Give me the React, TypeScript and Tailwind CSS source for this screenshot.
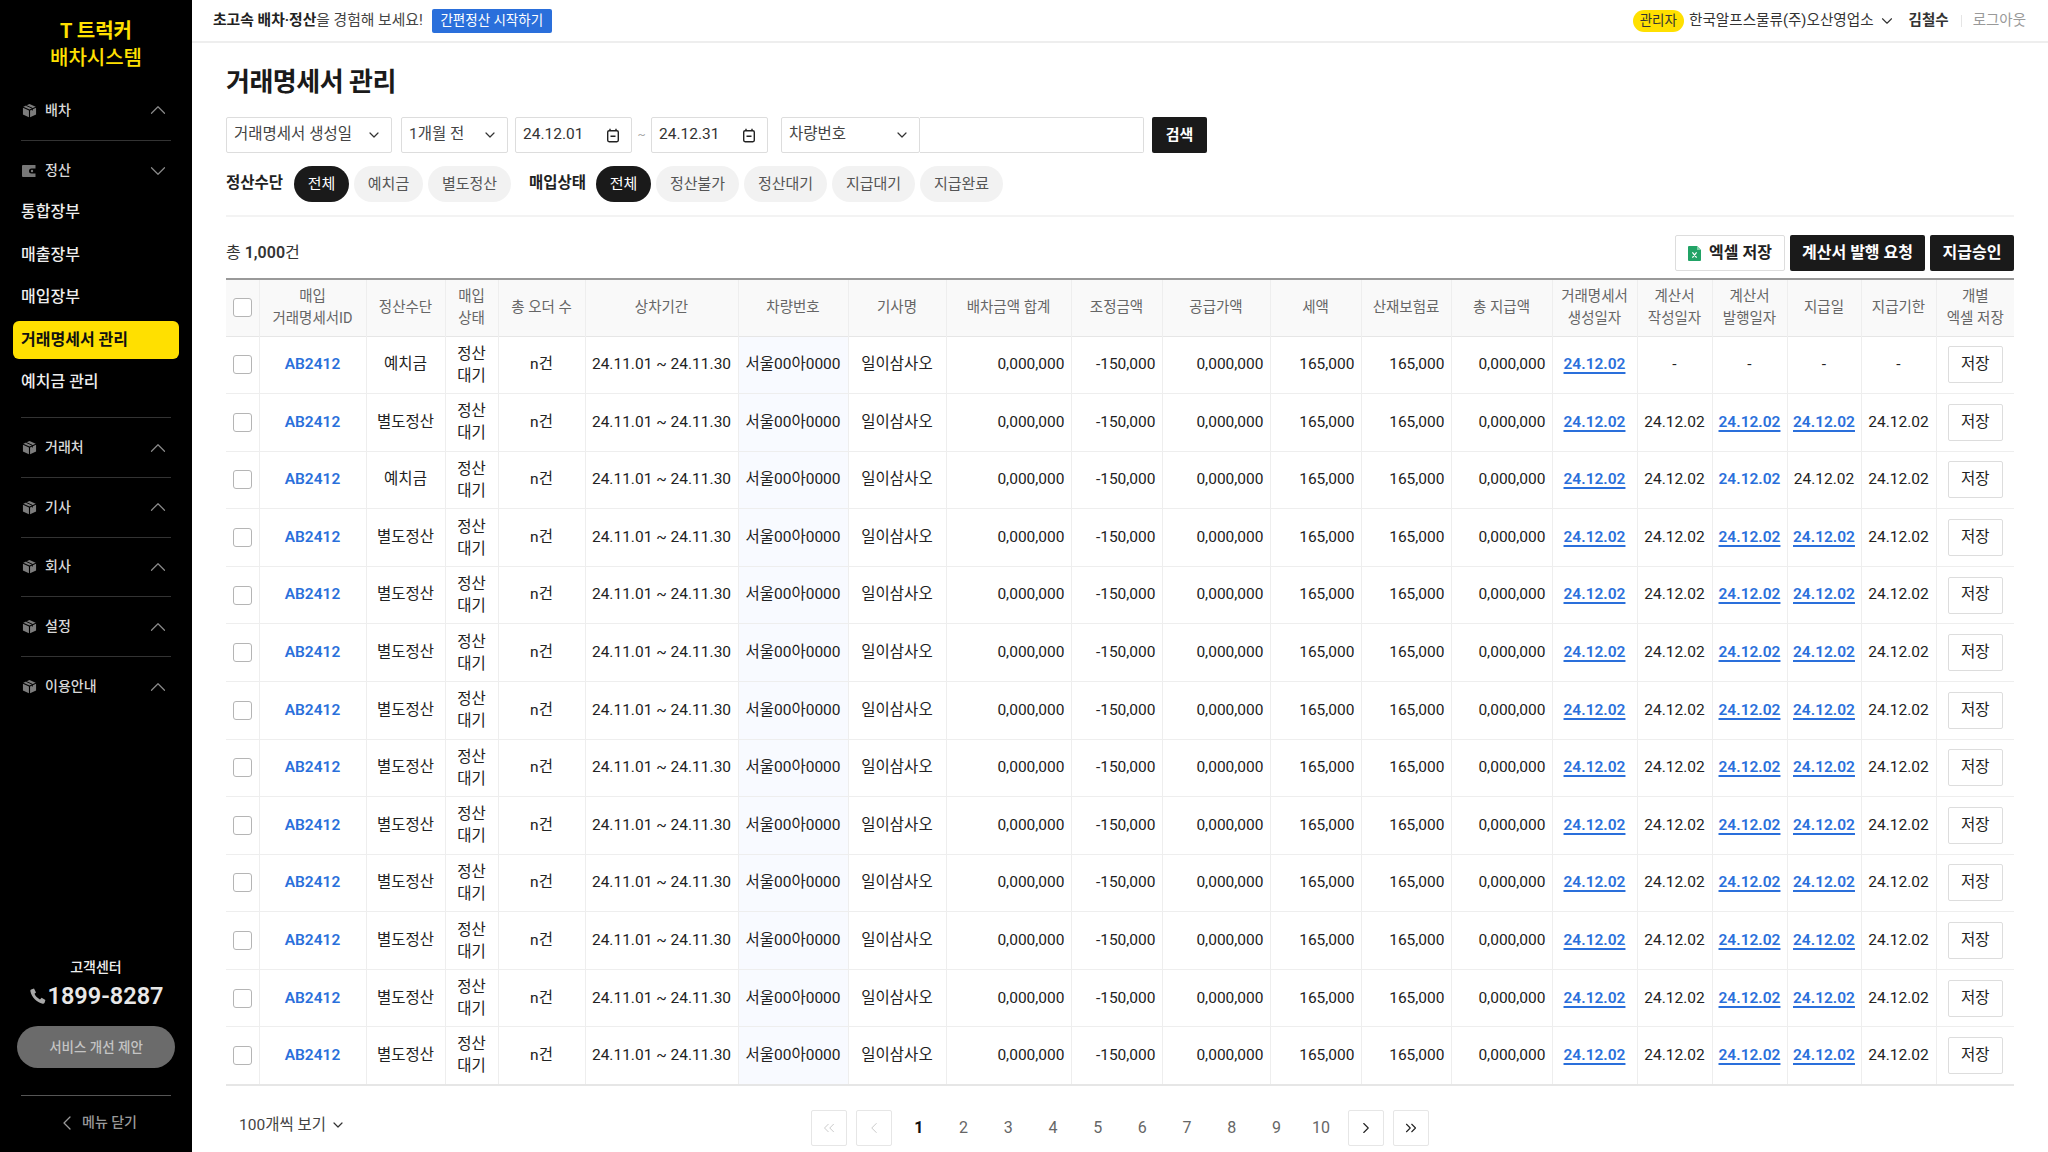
import { ChevronDown, ChevronLeft, ChevronRight, ChevronUp, ChevronsLeft, ChevronsRight } from "lucide-react";

const font = { fontFamily: 'Roboto, "Noto Sans CJK KR", sans-serif' };

function BoxIcon() {
    return (
        <svg width="15" height="15" viewBox="0 0 16 16" className="shrink-0">
            <path d="M8 1 14.6 3.9 8 6.9 1.4 3.9Z" fill="#7c7c7c" />
            <path d="M1 5 7.4 7.9V15.2L1 12.2Z" fill="#7c7c7c" />
            <path d="M15 5 8.6 7.9V15.2L15 12.2Z" fill="#7c7c7c" />
            <path d="M4.4 2.6 11 5.6V8" stroke="#000" strokeWidth="1" fill="none" />
        </svg>
    );
}

function WalletIcon() {
    return (
        <svg width="15" height="12" viewBox="0 0 15 12" className="shrink-0">
            <path d="M1 0H13.5V3.5H9.5A2.5 2.5 0 0 0 9.5 8.5H13.5V12H1A1 1 0 0 1 0 11V1A1 1 0 0 1 1 0Z" fill="#777" />
            <circle cx="10" cy="6" r="1.2" fill="#777" />
        </svg>
    );
}

function CalendarIcon() {
    return (
        <svg width="14" height="15" viewBox="0 0 14 15" fill="none" stroke="#222" strokeWidth="1.4" className="shrink-0">
            <rect x="1.7" y="2.7" width="10.6" height="11" rx="1.4" />
            <path d="M4 .8V3M10 .8V3M4.5 8.2H9.5" />
        </svg>
    );
}

function ExcelIcon() {
    return (
        <svg width="13" height="15" viewBox="0 0 13 15" className="shrink-0">
            <path d="M1 0H9L13 4V14A1 1 0 0 1 12 15H1A1 1 0 0 1 0 14V1A1 1 0 0 1 1 0Z" fill="#21a366" />
            <path d="M9 0 13 4H9Z" fill="#7fd1a8" />
            <path d="M4.4 6.4 8.6 11.6M8.6 6.4 4.4 11.6" stroke="#fff" strokeWidth="1.2" />
        </svg>
    );
}

function PhoneIcon() {
    return (
        <svg width="16" height="16" viewBox="0 0 16 16" className="shrink-0">
            <path d="M1.2 1.4 4 .6 6 4.4 4.5 5.8C5.3 8 7.6 10.4 10 11.4L11.6 9.8 15.4 12 14.6 14.8C14.3 15.6 13.4 15.9 12.6 15.7 6.8 14.4 1.6 9.2.4 3.3.2 2.5.5 1.7 1.2 1.4Z" fill="#a8a8a8" />
        </svg>
    );
}

function NavSection({ label }: { label: string }) {
    return (
        <div className="h-[59.7px] flex items-center border-b border-[#333] text-[#d8d8d8]">
            <div className="w-[24px] pl-[1px]"><BoxIcon /></div>
            <span className="text-[14px] font-medium flex-1">{label}</span>
            <ChevronUp size={26} strokeWidth={1.1} color="#8a8a8a" />
        </div>
    );
}

function Sidebar() {
    return (
        <aside className="w-[192px] shrink-0 bg-black flex flex-col">
            <div className="h-[81px] pt-[18px] text-center text-[#ffe000] font-medium text-[20px] leading-[27px]">
                <div className="font-bold">T 트럭커</div>
                <div>배차시스템</div>
            </div>
            <nav className="px-[21px]">
                <NavSection label="배차" />
                <div className="border-b border-[#333] pb-[13.5px]">
                    <div className="h-[50px] pt-[10px] flex items-center text-[#d8d8d8]">
                        <div className="w-[24px] pl-[1px]"><WalletIcon /></div>
                        <span className="text-[14px] font-medium flex-1">정산</span>
                        <ChevronDown size={26} strokeWidth={1.1} color="#8a8a8a" />
                    </div>
                    {["통합장부", "매출장부", "매입장부"].map((m) => (
                        <div key={m} className="h-[42.6px] flex items-center text-[16px] font-medium text-[#eeeeee]">{m}</div>
                    ))}
                    <div className="h-[42.6px] flex items-center">
                        <div className="-mx-[8px] w-[166px] h-[38px] rounded-[6px] bg-[#ffe000] px-[8px] flex items-center text-[16px] font-bold text-[#111]">거래명세서 관리</div>
                    </div>
                    <div className="h-[42.6px] flex items-center text-[16px] font-medium text-[#eeeeee]">예치금 관리</div>
                </div>
                <NavSection label="거래처" />
                <NavSection label="기사" />
                <NavSection label="회사" />
                <NavSection label="설정" />
                <div className="h-[59.7px] flex items-center text-[#d8d8d8]">
                    <div className="w-[24px] pl-[1px]"><BoxIcon /></div>
                    <span className="text-[14px] font-medium flex-1">이용안내</span>
                    <ChevronUp size={26} strokeWidth={1.1} color="#8a8a8a" />
                </div>
            </nav>
            <div className="mt-auto">
                <div className="text-center text-[14px] font-medium text-[#eeeeee] leading-[20px]">고객센터</div>
                <div className="flex items-center justify-center gap-[1px] mt-[3px] pl-[2px] text-[#e8e8e8]">
                    <PhoneIcon />
                    <span className="text-[23.5px] font-semibold leading-[32px]">1899-8287</span>
                </div>
                <div className="mx-[17px] mt-[14px] h-[42px] rounded-full bg-[#6b6b6b] flex items-center justify-center text-[13.5px] font-medium text-[#c4c4c4]">서비스 개선 제안</div>
                <div className="mx-[21px] mt-[27px] h-[55px] border-t border-[#555] flex items-center justify-center gap-[3px] text-[14px] font-medium text-[#999] pb-[1px]">
                    <ChevronLeft size={24} strokeWidth={1.3} />
                    메뉴 닫기
                </div>
                <div className="h-[2px]" />
            </div>
        </aside>
    );
}

function TopBar() {
    return (
        <header className="h-[43px] shrink-0 border-b-2 border-[#eeeeee] flex items-center pl-[21px] pr-[22px] text-[14.8px]">
            <span className="text-[#222]"><b className="font-semibold">초고속 배차·정산</b><span className="text-[#444]">을 경험해 보세요!</span></span>
            <span className="ml-[9px] h-[24px] w-[120px] rounded-[2px] bg-[#2a6fdb] text-white text-[13.5px] flex items-center justify-center">간편정산 시작하기</span>
            <div className="ml-auto flex items-center">
                <span className="h-[22px] px-[7px] rounded-full bg-[#ffe000] text-[#333] text-[13.5px] flex items-center">관리자</span>
                <span className="ml-[5px] text-[#333] text-[14.6px]">한국알프스물류(주)오산영업소</span>
                <ChevronDown size={18} strokeWidth={1.5} color="#333" className="ml-[4px]" />
                <b className="ml-[13px] font-semibold text-[#333] text-[14.5px]">김철수</b>
                <span className="ml-[12px] mr-[11px] w-px h-[12px] bg-[#e5e5e5]" />
                <span className="text-[#999] text-[14.5px]">로그아웃</span>
            </div>
        </header>
    );
}

function SelectBox({ label, className }: { label: string; className: string }) {
    return (
        <div className={`h-[36px] shrink-0 whitespace-nowrap border-[1.5px] border-[#dddddd] rounded-[2px] flex items-center justify-between pl-[7px] pr-[9px] text-[15.5px] text-[#444] ${className}`}>
            {label}
            <ChevronDown size={16} strokeWidth={1.8} color="#333" />
        </div>
    );
}

function DateBox({ label }: { label: string }) {
    return (
        <div className="w-[117px] h-[36px] shrink-0 border-[1.5px] border-[#dddddd] rounded-[2px] flex items-center justify-between pl-[7px] pr-[11px] text-[15.5px] text-[#333]">
            {label}
            <CalendarIcon />
        </div>
    );
}

function Chip({ label, active, w }: { label: string; active?: boolean; w: string }) {
    return (
        <span className={`h-[36px] rounded-full flex items-center justify-center text-[15px] ${w} ${active ? "bg-[#1a1a1a] text-white" : "bg-[#f2f2f2] text-[#555]"}`}>{label}</span>
    );
}

function Filters() {
    return (
        <>
            <div className="flex items-center mt-[17px]">
                <SelectBox label="거래명세서 생성일" className="w-[166px]" />
                <SelectBox label="1개월 전" className="w-[107px] ml-[9px]" />
                <div className="ml-[7px]"><DateBox label="24.12.01" /></div>
                <span className="w-[19px] text-center text-[12px] text-[#aaa]">~</span>
                <DateBox label="24.12.31" />
                <SelectBox label="차량번호" className="w-[139px] ml-[13px]" />
                <div className="w-[224px] h-[36px] border-[1.5px] border-l-0 border-[#dddddd] rounded-r-[2px]" />
                <span className="ml-[8px] w-[55px] h-[36px] rounded-[2px] bg-[#1a1a1a] text-white text-[15px] font-semibold flex items-center justify-center">검색</span>
            </div>
            <div className="flex items-center mt-[13px] pb-[13px] border-b-2 border-[#f3f3f3]">
                <b className="w-[68px] text-[15.5px] font-semibold text-[#222]">정산수단</b>
                <div className="flex gap-[5px]">
                    <Chip label="전체" active w="w-[55px]" />
                    <Chip label="예치금" w="w-[69px]" />
                    <Chip label="별도정산" w="w-[83px]" />
                </div>
                <b className="ml-[18px] w-[67px] text-[15.5px] font-semibold text-[#222]">매입상태</b>
                <div className="flex gap-[5px]">
                    <Chip label="전체" active w="w-[55px]" />
                    <Chip label="정산불가" w="w-[83px]" />
                    <Chip label="정산대기" w="w-[83px]" />
                    <Chip label="지급대기" w="w-[83px]" />
                    <Chip label="지급완료" w="w-[83px]" />
                </div>
            </div>
        </>
    );
}

const th = "border-r border-[#eeeeee] font-normal text-[14.5px] leading-[21.5px] text-[#666] px-0";
const td = "border-r border-[#eeeeee] text-center text-[15.5px] text-[#222] px-0";
const num = "border-r border-[#eeeeee] text-right pr-[6px] text-[15.5px] text-[#222]";
const link = "text-[#2a6fdb] font-semibold underline underline-offset-[3px] decoration-[1.5px]";

function DateLink() {
    return <span className={link}>24.12.02</span>;
}

function Row({ kind, method }: { kind: "none" | "mixed" | "full"; method: string }) {
    return (
        <tr className="h-[57.58px] border-b-[1.5px] border-[#eeeeee]">
            <td className={td}><span className="block mx-auto w-[19px] h-[19px] border-[1.5px] border-[#b5b5b5] rounded-[3px]" /></td>
            <td className={td}><span className="text-[#2a6fdb] font-semibold">AB2412</span></td>
            <td className={td}>{method}</td>
            <td className={`${td} leading-[22px]`}>정산<br />대기</td>
            <td className={td}>n건</td>
            <td className={td}>24.11.01 ~ 24.11.30</td>
            <td className={`${td} bg-[#f8faff]`}>서울00아0000</td>
            <td className={td}>일이삼사오</td>
            <td className={num}>0,000,000</td>
            <td className={num}>-150,000</td>
            <td className={num}>0,000,000</td>
            <td className={num}>165,000</td>
            <td className={num}>165,000</td>
            <td className={num}>0,000,000</td>
            <td className={td}><DateLink /></td>
            <td className={td}>{kind === "none" ? "-" : "24.12.02"}</td>
            <td className={td}>{kind === "none" ? "-" : kind === "mixed" ? <span className="text-[#2a6fdb] font-semibold">24.12.02</span> : <DateLink />}</td>
            <td className={td}>{kind === "none" ? "-" : kind === "mixed" ? "24.12.02" : <DateLink />}</td>
            <td className={td}>{kind === "none" ? "-" : "24.12.02"}</td>
            <td className="text-center">
                <span className="mx-auto w-[55px] h-[37px] border-[1.5px] border-[#dddddd] rounded-[2px] flex items-center justify-center text-[15.5px] text-[#222]">저장</span>
            </td>
        </tr>
    );
}

function DataTable() {
    const rows = Array.from({ length: 13 }, (_, i) => i);
    return (
        <table className="w-[1788px] table-fixed border-collapse border-t-2 border-b-2 border-t-[#999] border-b-[#e6e6e6]">
            <colgroup>
                <col className="w-[33px]" />
                <col className="w-[107px]" />
                <col className="w-[79px]" />
                <col className="w-[53px]" />
                <col className="w-[87px]" />
                <col className="w-[153px]" />
                <col className="w-[110px]" />
                <col className="w-[98px]" />
                <col className="w-[125px]" />
                <col className="w-[91px]" />
                <col className="w-[108px]" />
                <col className="w-[91px]" />
                <col className="w-[90px]" />
                <col className="w-[101px]" />
                <col className="w-[85px]" />
                <col className="w-[75px]" />
                <col className="w-[75px]" />
                <col className="w-[74px]" />
                <col className="w-[75px]" />
                <col className="w-[78px]" />
            </colgroup>
            <thead>
                <tr className="h-[57px] bg-[#f9f9f9] border-b-[1.5px] border-[#e6e6e6]">
                    <th className={th}><span className="block mx-auto w-[19px] h-[19px] border-[1.5px] border-[#b5b5b5] rounded-[3px] bg-white" /></th>
                    <th className={th}>매입<br />거래명세서ID</th>
                    <th className={th}>정산수단</th>
                    <th className={th}>매입<br />상태</th>
                    <th className={th}>총 오더 수</th>
                    <th className={th}>상차기간</th>
                    <th className={th}>차량번호</th>
                    <th className={th}>기사명</th>
                    <th className={th}>배차금액 합계</th>
                    <th className={th}>조정금액</th>
                    <th className={th}>공급가액</th>
                    <th className={th}>세액</th>
                    <th className={th}>산재보험료</th>
                    <th className={th}>총 지급액</th>
                    <th className={th}>거래명세서<br />생성일자</th>
                    <th className={th}>계산서<br />작성일자</th>
                    <th className={th}>계산서<br />발행일자</th>
                    <th className={th}>지급일</th>
                    <th className={th}>지급기한</th>
                    <th className="font-normal text-[14.5px] leading-[21.5px] text-[#666]">개별<br />엑셀 저장</th>
                </tr>
            </thead>
            <tbody>
                {rows.map((i) => (
                    <Row key={i} kind={i === 0 ? "none" : i === 2 ? "mixed" : "full"} method={i === 0 || i === 2 ? "예치금" : "별도정산"} />
                ))}
            </tbody>
        </table>
    );
}

function PageButton({ children }: { children: React.ReactNode }) {
    return <span className="w-[36px] h-[36px] border-[1.5px] border-[#e6e6e6] rounded-[2px] flex items-center justify-center">{children}</span>;
}

function Pagination() {
    const pages = [1, 2, 3, 4, 5, 6, 7, 8, 9, 10];
    return (
        <div className="relative h-[84px] flex items-center justify-center">
            <div className="absolute left-[13px] top-[28px] flex items-center gap-[4px] text-[15.5px] text-[#444]">
                100개씩 보기
                <ChevronDown size={16} strokeWidth={1.8} color="#333" />
            </div>
            <div className="flex items-center">
                <PageButton><ChevronsLeft size={18} strokeWidth={1.2} color="#c4c4c4" /></PageButton>
                <span className="w-[9px]" />
                <PageButton><ChevronLeft size={18} strokeWidth={1.2} color="#c4c4c4" /></PageButton>
                <span className="w-[5px]" />
                {pages.map((p) => (
                    <span key={p} className={`w-[44.7px] text-center text-[16px] ${p === 1 ? "font-bold text-[#111]" : "text-[#666]"}`}>{p}</span>
                ))}
                <span className="w-[5px]" />
                <PageButton><ChevronRight size={18} strokeWidth={1.5} color="#222" /></PageButton>
                <span className="w-[9px]" />
                <PageButton><ChevronsRight size={18} strokeWidth={1.5} color="#222" /></PageButton>
            </div>
        </div>
    );
}

export default function App() {
    return (
        <div className="h-screen flex overflow-hidden bg-white" style={font}>
            <Sidebar />
            <div className="flex-1 min-w-0 flex flex-col">
                <TopBar />
                <main className="px-[34px]">
                    <h1 className="mt-[20px] mb-[-1px] text-[26px] leading-[38px] font-semibold text-[#1a1a1a] tracking-[-0.5px]">거래명세서 관리</h1>
                    <Filters />
                    <div className="flex items-center mt-[18px] mb-[7px]">
                        <span className="text-[16px] text-[#333]">총 <b className="font-semibold">1,000</b>건</span>
                        <div className="ml-auto flex gap-[5px]">
                            <span className="w-[110px] h-[36px] border-[1.5px] border-[#dddddd] rounded-[2px] flex items-center justify-center gap-[8px] text-[16px] font-semibold text-[#222]"><ExcelIcon />엑셀 저장</span>
                            <span className="w-[135px] h-[36px] rounded-[2px] bg-[#1a1a1a] flex items-center justify-center text-[16px] font-semibold text-white">계산서 발행 요청</span>
                            <span className="w-[84px] h-[36px] rounded-[2px] bg-[#1a1a1a] flex items-center justify-center text-[16px] font-semibold text-white">지급승인</span>
                        </div>
                    </div>
                    <DataTable />
                    <Pagination />
                </main>
            </div>
        </div>
    );
}
